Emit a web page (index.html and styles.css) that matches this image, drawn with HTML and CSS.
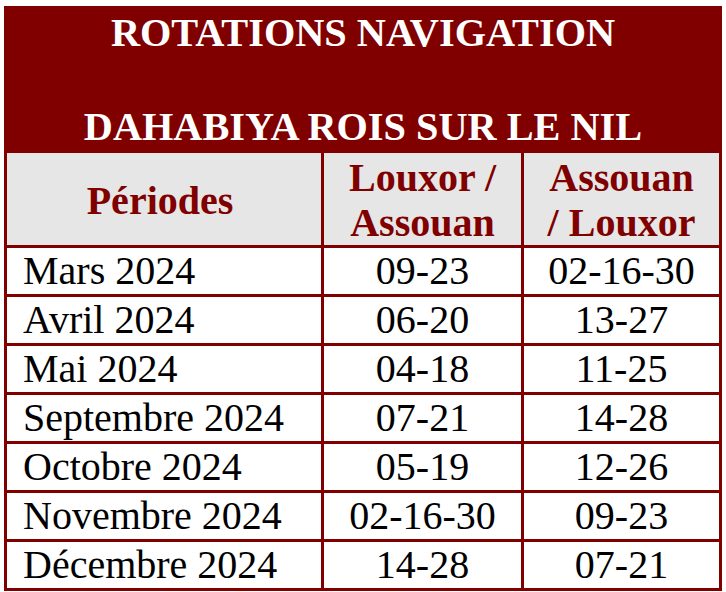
FILE: index.html
```html
<!DOCTYPE html>
<html lang="fr">
<head>
<meta charset="utf-8">
<title>Rotations Navigation</title>
<link rel="stylesheet" href="styles.css">
</head>
<body>
<table class="rot">
  <colgroup>
    <col class="c1">
    <col class="c2">
    <col class="c3">
  </colgroup>
  <thead>
    <tr>
      <th class="title" colspan="3">ROTATIONS NAVIGATION<br>&nbsp;<br>DAHABIYA ROIS SUR LE NIL</th>
    </tr>
    <tr class="head">
      <th class="hper">Périodes</th>
      <th>Louxor /<br>Assouan</th>
      <th>Assouan<br>/ Louxor</th>
    </tr>
  </thead>
  <tbody>
    <tr><td class="per">Mars 2024</td><td>09-23</td><td>02-16-30</td></tr>
    <tr><td class="per">Avril 2024</td><td>06-20</td><td>13-27</td></tr>
    <tr><td class="per">Mai 2024</td><td>04-18</td><td>11-25</td></tr>
    <tr><td class="per">Septembre 2024</td><td>07-21</td><td>14-28</td></tr>
    <tr><td class="per">Octobre 2024</td><td>05-19</td><td>12-26</td></tr>
    <tr><td class="per">Novembre 2024</td><td>02-16-30</td><td>09-23</td></tr>
    <tr><td class="per">Décembre 2024</td><td>14-28</td><td>07-21</td></tr>
  </tbody>
</table>
</body>
</html>
```

FILE: styles.css
```css
html, body {
  margin: 0;
  padding: 0;
  background: #ffffff;
}

body {
  padding: 6px 0 0 4px;
  font-family: "Liberation Serif", "Times New Roman", serif;
}

.rot {
  border-collapse: collapse;
  table-layout: fixed;
  width: 718px;
}

.c1 { width: 317px; }
.c2 { width: 200px; }
.c3 { width: 198px; }

.rot th,
.rot td {
  border: 3px solid #800000;
  padding: 0;
  font-family: "Liberation Serif", "Times New Roman", serif;
  font-size: 40px;
  line-height: 46px;
  text-align: center;
  vertical-align: middle;
}

.rot .title {
  background: #800000;
  color: #ffffff;
  font-size: 40.3px;
  font-weight: 700;
  line-height: 47px;
  height: 141px;
  padding: 0;
}

.head th {
  background: #e6e6e6;
  color: #800000;
  font-weight: 700;
  line-height: 45px;
  height: 90px;
  padding: 2px 0 0;
}

.head th.hper {
  padding-right: 8px;
}

.rot td {
  color: #000000;
  font-weight: 400;
  height: 46px;
}

.rot td.per {
  text-align: left;
  padding-left: 16px;
}
```
